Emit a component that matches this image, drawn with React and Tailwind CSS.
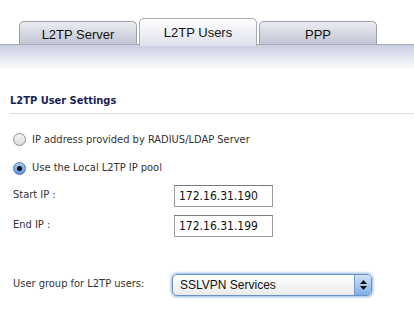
function Tab({ label, active }) {
  if (active) {
    return (
      <div className="relative z-10 -mb-[2px] flex h-[28px] w-[118px] items-start justify-center rounded-t-[5px] border border-b-0 border-[#a9abb3] bg-gradient-to-b from-white to-[#dfe1ec] pt-[4px] text-[13px] text-[#111]">
        {label}
      </div>
    );
  }
  return (
    <div className="flex h-[23px] w-[118px] items-start justify-center rounded-t-[5px] border border-b-0 border-[#9c9ea8] bg-gradient-to-b from-[#ecedf1] to-[#c1c4d4] pt-[3px] text-[13px] text-[#111]">
      {label}
    </div>
  );
}

function Radio({ checked, label }) {
  return (
    <div className="flex items-center gap-[6px]">
      {checked ? (
        <span className="flex h-[13px] w-[13px] items-center justify-center rounded-full border border-[#4a78b8] bg-gradient-to-b from-[#a9c9ef] to-[#5d95d8]">
          <span className="h-[5px] w-[5px] rounded-full bg-[#111]" />
        </span>
      ) : (
        <span className="h-[13px] w-[13px] rounded-full border border-[#8e8e8e] bg-gradient-to-b from-[#f2f2f2] to-[#dcdcdc]" />
      )}
      <span>{label}</span>
    </div>
  );
}

function IpField({ label, value }) {
  return (
    <div className="flex items-center">
      <span className="w-[161px]">{label}</span>
      <div className="flex h-[22px] w-[99px] items-center border border-[#9a9a9a] border-t-[#7a7a7a] bg-white px-[4px] text-[12px] text-[#111]">
        {value}
      </div>
    </div>
  );
}

export default function App() {
  return (
    <div className="h-[334px] w-[414px] overflow-hidden bg-white font-['DejaVu_Sans_Condensed','DejaVu_Sans',sans-serif] text-[11px] text-[#333]">
      <div className="flex items-end gap-[2px] pl-[19px] pt-[18px] font-['Liberation_Sans',Arial,sans-serif]">
        <Tab label="L2TP Server" />
        <Tab label="L2TP Users" active />
        <Tab label="PPP" />
      </div>
      <div className="h-[26px] border-t border-[#a9abb3] bg-gradient-to-b from-[#c9cde0] to-white" />

      <div className="mt-[23px] ml-[10px] border-b border-[#dcdcdc] pb-[3px] text-[11px] font-bold text-[#1c2456]">
        L2TP User Settings
      </div>

      <div className="mt-[18px] flex flex-col gap-[12px] pl-[13px]">
        <Radio label="IP address provided by RADIUS/LDAP Server" />
        <Radio checked label="Use the Local L2TP IP pool" />
      </div>

      <div className="mt-[8px] flex flex-col gap-[8px] pl-[13px]">
        <IpField label="Start IP :" value="172.16.31.190" />
        <IpField label="End IP :" value="172.16.31.199" />
      </div>

      <div className="mt-[37px] flex items-center pl-[13px]">
        <span className="w-[159px]">User group for L2TP users:</span>
        <div className="flex h-[22px] w-[200px] items-center rounded-[5px] border border-[#6a8fc4] bg-gradient-to-b from-white to-[#eaeaea] shadow-[0_0_3px_1px_#8fb4e6] font-['Liberation_Sans',Arial,sans-serif] text-[12px] text-[#111]">
          <span className="flex-1 pl-[7px]">SSLVPN Services</span>
          <span className="flex h-full w-[17px] flex-col items-center justify-center gap-[2px] rounded-r-[4px] border-l border-[#7a9ccc] bg-gradient-to-b from-[#cfe1f6] to-[#7fb0e6]">
            <svg width="7" height="4" viewBox="0 0 7 4"><path d="M0 4 L3.5 0 L7 4 Z" fill="#111" /></svg>
            <svg width="7" height="4" viewBox="0 0 7 4"><path d="M0 0 L3.5 4 L7 0 Z" fill="#111" /></svg>
          </span>
        </div>
      </div>
    </div>
  );
}
